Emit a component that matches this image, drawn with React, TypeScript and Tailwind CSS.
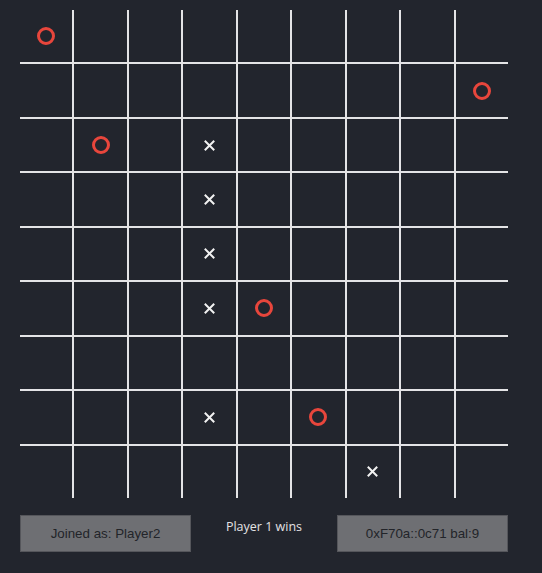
import * as React from "react"

type Mark = "x" | "o" | null

const SIZE = 9

// board state keyed by "col,row"
const moves: Record<string, Mark> = {
  "0,0": "o",
  "8,1": "o",
  "1,2": "o",
  "3,2": "x",
  "3,3": "x",
  "3,4": "x",
  "3,5": "x",
  "4,5": "o",
  "3,7": "x",
  "5,7": "o",
  "6,8": "x",
}

function Ring() {
  return (
    <div className="h-[18px] w-[18px] rounded-full border-[3px] border-[#e8463c]" />
  )
}

function Cross() {
  return (
    <svg width="11" height="11" viewBox="0 0 11 11">
      <path
        d="M1.5 1.5 L9.5 9.5 M9.5 1.5 L1.5 9.5"
        stroke="#f2f2f2"
        strokeWidth="2"
        strokeLinecap="square"
      />
    </svg>
  )
}

function Cell({ mark }: { mark: Mark }) {
  return (
    <div className="flex items-center justify-center bg-[#22252d]">
      {mark === "o" && <Ring />}
      {mark === "x" && <Cross />}
    </div>
  )
}

export default function App() {
  const cells = []
  for (let row = 0; row < SIZE; row++) {
    for (let col = 0; col < SIZE; col++) {
      cells.push(<Cell key={`${col},${row}`} mark={moves[`${col},${row}`] ?? null} />)
    }
  }

  return (
    <div className="min-h-screen bg-[#22252d] pl-[20px] pt-[10px] font-['Liberation_Sans',Arial,sans-serif]">
      <div className="grid h-[488px] w-[488px] grid-cols-9 grid-rows-9 gap-[2px] bg-[#e4e4e6]">
        {cells}
      </div>
      <div className="mt-[17px] flex w-[488px] items-start justify-between">
        <button className="h-[37px] w-[171px] border border-[#55565b] bg-[#6e6f73] text-[13.333px] text-[#222429]">
          Joined as: Player2
        </button>
        <div className="pt-[3px] font-['Open_Sans',sans-serif] text-[12.5px] text-[#e2e2e4]">
          Player 1 wins
        </div>
        <button className="h-[37px] w-[171px] border border-[#55565b] bg-[#6e6f73] text-[13.333px] text-[#222429]">
          0xF70a::0c71 bal:9
        </button>
      </div>
    </div>
  )
}
